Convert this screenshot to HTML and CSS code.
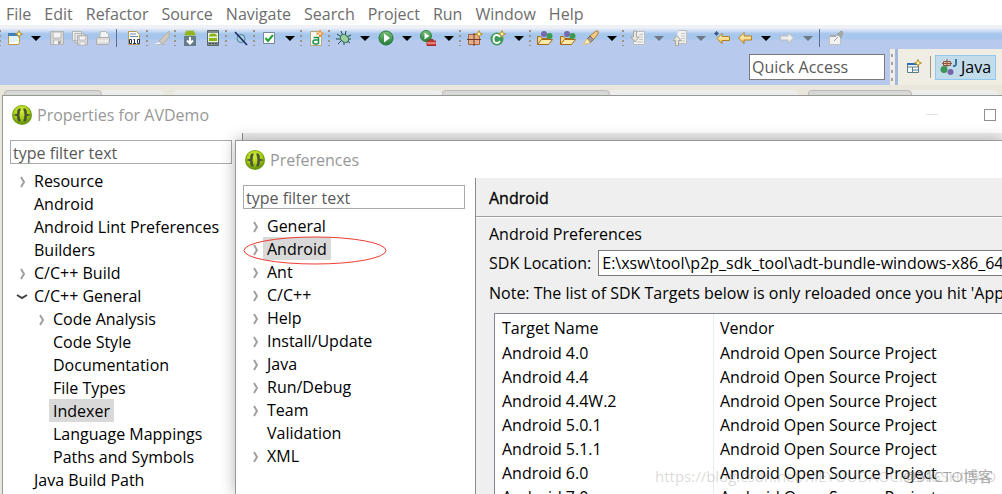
FILE: index.html
```html
<!DOCTYPE html>
<html lang="en">
<head>
<meta charset="utf-8">
<title>Preferences</title>
<link rel="stylesheet" href="styles.css">
</head>
<body>
<svg class="defs" aria-hidden="true">
  <defs>
    <linearGradient id="gold" x1="0" y1="0" x2="0" y2="1"><stop offset="0" stop-color="#fffbe0"/><stop offset="1" stop-color="#f3c24c"/></linearGradient>
    <radialGradient id="lime" cx=".45" cy=".3" r=".75"><stop offset="0" stop-color="#d4ee3a"/><stop offset=".6" stop-color="#a3cc12"/><stop offset="1" stop-color="#5f8a08"/></radialGradient>
    <linearGradient id="green" x1="0" y1="0" x2="0" y2="1"><stop offset="0" stop-color="#7fbf7a"/><stop offset="1" stop-color="#1f7d35"/></linearGradient>
    <symbol id="brand" viewBox="0 0 20 20">
      <circle cx="10" cy="10" r="10" fill="#6d960c"/><circle cx="10" cy="9.600" r="9" fill="url(#lime)"/>
      <path d="M8.500 4.500q-2 0-2 2.500v1.500q0 1.200-1 1.500q1 .3 1 1.500v1.500q0 2.500 2 2.500M11.500 4.500q2 0 2 2.500v1.500q0 1.200 1 1.500q-1 .3-1 1.500v1.500q0 2.500-2 2.500" fill="none" stroke="#4a5238" stroke-width="2.600"/>
    </symbol>
    <symbol id="star" viewBox="0 0 8 8"><path d="M4 .5l1 2.500l2.500 1l-2.500 1l-1 2.500l-1-2.500l-2.500-1l2.500-1z" fill="#fff6b0" stroke="#b98a20" stroke-width=".9"/></symbol>
    <symbol id="folder" viewBox="0 0 16 16">
      <path d="M.5 14.500v-8h3l1.500 2h6v2" fill="#f7d78a" stroke="#a56a16"/>
      <circle cx="7" cy="4" r="3" fill="#7468b0"/><circle cx="12.500" cy="6" r="3" fill="#3c9b4f"/>
      <path d="M.5 14.500l4-5h11l-4 5z" fill="#fde9ac" stroke="#a56a16"/>
    </symbol>
    <symbol id="page" viewBox="0 0 16 16"><path d="M6.500 1.500h8v13h-11v-5" fill="#f1f1f1" stroke="#bdbdbd"/><path d="M9 4.500h4M9 7h4M9 9.500h4M7 12h6" stroke="#c4c4c4"/></symbol>
  </defs>
</svg>

<div class="workbench">
  <nav class="menubar">
    <button>File</button><button>Edit</button><button>Refactor</button><button>Source</button><button>Navigate</button><button>Search</button><button>Project</button><button>Run</button><button>Window</button><button>Help</button>
  </nav>

  <header class="coolbar">
    <div class="toolbar">
      <i class="grip first"></i>
      <button class="tool" aria-label="New"><svg viewBox="0 0 16 16"><path d="M1.500 3.500h11v9q0 2-2 2h-9z" fill="#fff" stroke="#c39a3a"/><path d="M1 3h10v3h-10z" fill="#3f7fb5"/><path d="M2 6h9v5l-9 2z" fill="#e3f1fb"/><use href="#star" x="8" y="0" width="8" height="8"/></svg></button>
      <button class="drop" aria-label="New menu"></button>
      <button class="tool" aria-label="Save"><svg viewBox="0 0 16 16"><path d="M1.500 1.500h13v13h-13z" fill="#d8d8d8" stroke="#b0b0b0"/><path d="M4 2h8v6h-8zM4.500 10h7v4.500h-7z" fill="#f3f3f3" stroke="#b8b8b8"/><path d="M9 11h2v3h-2z" fill="#a5a5a5"/></svg></button>
      <button class="tool" aria-label="Save all"><svg viewBox="0 0 16 16"><path d="M.5 1.500h9v9h-9zM3 3.500h9v9h-9z" fill="#eee" stroke="#b5b5b5"/><path d="M5.500 5.500h10v9.500h-10z" fill="#d8d8d8" stroke="#adadad"/><path d="M7.500 6h6v4h-6zM8 12h5v3h-5z" fill="#f4f4f4" stroke="#b8b8b8" stroke-width=".7"/></svg></button>
      <button class="tool" aria-label="Print"><svg viewBox="0 0 16 16"><path d="M4.500 8l1-6.500h5l3 3v4" fill="#f2f2f2" stroke="#b8b8b8"/><path d="M1.500 8.500l2-1h11v5l-2 2h-11z" fill="#dcdcdc" stroke="#adadad"/><path d="M3 11h10" stroke="#fff"/></svg></button>
      <i class="bar"></i>
      <button class="tool" aria-label="Binary parser"><svg viewBox="0 0 16 16"><path d="M2.500 1.500h8l3 3v10h-11z" fill="#fffdf0" stroke="#b59b55"/><path d="M4 4h6M4 6.500h8" stroke="#6a8cc0"/><path d="M3.500 9.500h2v4h-2zM8.500 9v5M7 13.500h3M8.500 9.500h-1M11.500 9.500h2v4h-2z" fill="none" stroke="#1c2c5e"/></svg></button>
      <i class="grip"></i>
      <button class="tool" aria-label="Mark occurrences"><svg viewBox="0 0 16 16"><path d="M0 14l5-2l2 2z" fill="#eee"/><path d="M5 11l8-8l2-2v6l-6 7z" fill="#cdc9c2" stroke="#b5b0a8"/><path d="M3 14.500h9" stroke="#bbb"/></svg></button>
      <i class="grip"></i>
      <button class="tool" aria-label="SDK manager"><svg viewBox="0 0 16 16"><path d="M3 5q0-4 5-4t5 4zM4 0l1.500 2M12 0l-1.500 2" fill="#93b51b" stroke="#93b51b"/><path d="M2 6h12v10h-12z" fill="#657d8b"/><path d="M8 7v6M5 10.500l3 3l3-3" fill="none" stroke="#fff" stroke-width="2"/></svg></button>
      <button class="tool" aria-label="Virtual device manager"><svg viewBox="0 0 16 16"><path d="M2.500 .5h11v15h-11z" fill="#7f8d8d" stroke="#596669"/><path d="M3 3h10v9h-10z" fill="#edf3d5"/><path d="M4 6.500q0-3 4-3t4 3zM4 8h8v3h-8z" fill="#89b51a"/><path d="M4 13.500h8" stroke="#424d50" stroke-dasharray="2 1"/></svg></button>
      <i class="grip"></i>
      <button class="tool" aria-label="Skip breakpoints"><svg viewBox="0 0 16 16"><circle cx="8" cy="8.500" r="4" fill="#a9d1e0" stroke="#4c7d9c"/><path d="M2 2l12 13" stroke="#17255d" stroke-width="1.500"/></svg></button>
      <i class="grip"></i>
      <button class="tool" aria-label="Run lint"><svg viewBox="0 0 16 16"><path d="M2.500 2.500h11v11h-11z" fill="#fff" stroke="#77889c"/><path d="M4.500 8l2.500 3l5-6" fill="none" stroke="#21a12b" stroke-width="2"/></svg></button>
      <button class="drop" aria-label="Lint menu"></button>
      <i class="grip"></i>
      <button class="tool" aria-label="New Android file"><svg viewBox="0 0 16 16"><path d="M2.500 1.500h8l3 3v11h-11z" fill="#fbfbf2" stroke="#b7a57c"/><path d="M5.500 7.500h5v6.500M10 10h-3q-2 0-2 2t2 2h3" fill="none" stroke="#199253" stroke-width="1.500"/><path d="M12 0v7M8.500 3.500h7" stroke="#f59331" stroke-width="2"/><circle cx="12" cy="3.500" r="1" fill="#fff"/></svg></button>
      <i class="grip"></i>
      <button class="tool" aria-label="Debug"><svg viewBox="0 0 16 16"><path d="M5 1l2 5M10 1l-1 5M1 4l6 4M15 5l-6 3M0 9h15M2 14l5-5M8 15v-6M14 13l-5-4" stroke="#1f4a45"/><ellipse cx="8.500" cy="8.500" rx="4.500" ry="3.500" transform="rotate(40 8.500 8.500)" fill="#9ccf9b" stroke="#2d6e5b"/></svg></button>
      <button class="drop" aria-label="Debug menu"></button>
      <button class="tool" aria-label="Run"><svg viewBox="0 0 16 16"><circle cx="8" cy="8" r="7" fill="url(#green)" stroke="#26773a"/><path d="M6 3.500l6 4.500l-6 4.500z" fill="#fff"/></svg></button>
      <button class="drop" aria-label="Run menu"></button>
      <button class="tool" aria-label="External tools"><svg viewBox="0 0 16 16"><circle cx="6" cy="6" r="5.500" fill="url(#green)" stroke="#2f8741"/><path d="M4.500 2.500l5 3.500l-5 3.500z" fill="#fff"/><path d="M7 11h9v4.500h-9zM10 11v-1.500h3v1.500" fill="#d5473d" stroke="#9b2d28"/><path d="M7 13h9" stroke="#f0b0a8"/></svg></button>
      <button class="drop" aria-label="External tools menu"></button>
      <i class="grip"></i>
      <button class="tool" aria-label="New package"><svg viewBox="0 0 16 16"><path d="M1.500 4.500h11v10h-11z" fill="#e5ad88" stroke="#a0603d"/><path d="M7 3v13M0 9.500h14" stroke="#71382a"/><use href="#star" x="8" y="0" width="8" height="8"/></svg></button>
      <button class="tool" aria-label="New class"><svg viewBox="0 0 16 16"><circle cx="7" cy="9" r="6.500" fill="#3d9b57"/><path d="M10 7q-1-2-3-2q-3.500 0-3.500 4t3.500 4q2 0 3-2" fill="none" stroke="#fff" stroke-width="1.800"/><use href="#star" x="8" y="0" width="8" height="8"/></svg></button>
      <button class="drop" aria-label="New class menu"></button>
      <i class="grip"></i>
      <button class="tool" aria-label="Open type"><svg><use href="#folder"/></svg></button>
      <button class="tool" aria-label="Open task"><svg><use href="#folder"/></svg></button>
      <button class="tool" aria-label="Search"><svg viewBox="0 0 16 16"><path d="M7 6l6-5h2v3l-5 6z" fill="#f8c984" stroke="#b07b35"/><path d="M4 9l3-3l3.500 3.500l-3 3z" fill="#a59a95" stroke="#756863"/><path d="M4 9l-3.500 5.500l6.500-2z" fill="#fffbd0" stroke="#e0c060"/></svg></button>
      <button class="drop" aria-label="Search menu"></button>
      <i class="grip"></i>
      <button class="tool" aria-label="Next annotation"><svg viewBox="0 0 16 16"><use href="#page"/><path d="M3.500 1h3v6h2.500l-4 5l-4-5h2.500z" fill="#e9e6df" stroke="#aaa69c"/></svg></button>
      <button class="drop dim" aria-label="Next annotation menu"></button>
      <button class="tool" aria-label="Previous annotation"><svg viewBox="0 0 16 16"><use href="#page" y="-1"/><path d="M3.500 15.500h3v-5h2.500l-4-5l-4 5h2.500z" fill="#e9e6df" stroke="#aaa69c"/></svg></button>
      <button class="drop dim" aria-label="Previous annotation menu"></button>
      <button class="tool" aria-label="Last edit location"><svg viewBox="0 0 16 16"><path d="M3 8.500l5-5v3h7.500v4h-7.500v3z" fill="url(#gold)" stroke="#b2801e"/><path d="M2.500 1v5M0 3.500h5M1 2l3 3M4 2l-3 3" stroke="#27517c" stroke-width=".8"/></svg></button>
      <button class="tool" aria-label="Back"><svg viewBox="0 0 16 16"><path d="M1.500 8l5.500-5.500v3.500h7.500v4h-7.500v3.500z" fill="url(#gold)" stroke="#b2801e"/></svg></button>
      <button class="drop" aria-label="Back menu"></button>
      <button class="tool" aria-label="Forward"><svg viewBox="0 0 16 16"><path d="M14.500 8l-5.500-5.500v3.500h-7.500v4h7.500v3.500z" fill="#eee" stroke="#bcbcbc"/></svg></button>
      <button class="drop dim" aria-label="Forward menu"></button>
      <i class="bar"></i>
      <button class="tool" aria-label="Pin editor"><svg viewBox="0 0 16 16"><path d="M.5 5.500h11v9h-11z" fill="#f2f2f2" stroke="#c0c0c0"/><path d="M1 5h6v2h-6z" fill="#aaa"/><path d="M5 11l4-4" stroke="#9b9b9b"/><path d="M8 4l4 4l1-3l1-3l-2-1l-2 2z" fill="#a6aaa2" stroke="#8e938c" stroke-width=".6"/></svg></button>
    </div>
    <div class="accessrow">
      <input class="quick" type="text" aria-label="Quick Access" placeholder="Quick Access">
      <div class="perspectives">
        <i class="grip"></i><i class="edge"></i>
        <button class="tool open" aria-label="Open perspective"><svg viewBox="0 0 16 16"><path d="M1.500 4.500h11v9h-11zM1.500 8h11M6.500 8v6M6.500 11h6" fill="#f6fbfd" stroke="#5b7d84"/><path d="M1 4h10v2h-10z" fill="#2c6cb5"/><use href="#star" x="8" y="0" width="8" height="8"/></svg></button>
        <i class="rule"></i>
        <button class="java"><svg viewBox="0 0 18 18"><path d="M3.500 3.500h7v4h-7zM7 1v8M2 5.500h10" fill="#ecc5a5" stroke="#8c5542"/><circle cx="4" cy="11.500" r="3.500" fill="#3e9655"/><circle cx="10.500" cy="14" r="3" fill="#7565ae"/><path d="M16 1v5q0 2.500-3 2" fill="none" stroke="#3774a8" stroke-width="2"/></svg>Java</button>
      </div>
    </div>
  </header>

  <div class="tabstrip"><i class="tab on wide"></i><i class="tab"></i><i class="tab spaced"></i><i class="tab on middle"></i><i class="tab grow"></i><i class="tab on spaced"></i><i class="tab end"></i></div>

  <section class="window properties">
    <div class="titlebar"><svg><use href="#brand"/></svg><h1>Properties for AVDemo</h1><div class="controls"><button class="minimize" aria-label="Minimize"></button><button class="maximize" aria-label="Maximize"></button></div></div>
    <div class="split">
      <div class="side">
        <input class="filter" type="text" aria-label="Filter properties" placeholder="type filter text">
        <ul class="tree">
          <li><div class="node"><button class="twisty" aria-label="Expand"><svg viewBox="0 0 8 12"><path d="M2 1l3 5l-3 5"/></svg></button><span>Resource</span></div></li>
          <li><div class="node leaf"><span>Android</span></div></li>
          <li><div class="node leaf"><span>Android Lint Preferences</span></div></li>
          <li><div class="node leaf"><span>Builders</span></div></li>
          <li><div class="node"><button class="twisty" aria-label="Expand"><svg viewBox="0 0 8 12"><path d="M2 1l3 5l-3 5"/></svg></button><span>C/C++ Build</span></div></li>
          <li><div class="node"><button class="twisty opened" aria-label="Collapse"><svg viewBox="0 0 12 8"><path d="M1 2l5 3l5-3"/></svg></button><span>C/C++ General</span></div>
            <ul>
              <li><div class="node"><button class="twisty" aria-label="Expand"><svg viewBox="0 0 8 12"><path d="M2 1l3 5l-3 5"/></svg></button><span>Code Analysis</span></div></li>
              <li><div class="node leaf"><span>Code Style</span></div></li>
              <li><div class="node leaf"><span>Documentation</span></div></li>
              <li><div class="node leaf"><span>File Types</span></div></li>
              <li><div class="node leaf"><span class="selected">Indexer</span></div></li>
              <li><div class="node leaf"><span>Language Mappings</span></div></li>
              <li><div class="node leaf"><span>Paths and Symbols</span></div></li>
            </ul>
          </li>
          <li><div class="node leaf"><span>Java Build Path</span></div></li>
        </ul>
      </div>
      <div class="pane"></div>
    </div>
  </section>

  <section class="window preferences">
    <div class="titlebar"><svg><use href="#brand"/></svg><h1>Preferences</h1></div>
    <div class="split">
      <div class="side">
        <input class="filter" type="text" aria-label="Filter preferences" placeholder="type filter text">
        <ul class="tree">
          <li><div class="node"><button class="twisty" aria-label="Expand"><svg viewBox="0 0 8 12"><path d="M2 1l3 5l-3 5"/></svg></button><span>General</span></div></li>
          <li><div class="node"><button class="twisty" aria-label="Expand"><svg viewBox="0 0 8 12"><path d="M2 1l3 5l-3 5"/></svg></button><span class="selected">Android</span><svg class="marker" viewBox="0 0 144 29"><ellipse cx="72" cy="14.500" rx="71" ry="13.500"/></svg></div></li>
          <li><div class="node"><button class="twisty" aria-label="Expand"><svg viewBox="0 0 8 12"><path d="M2 1l3 5l-3 5"/></svg></button><span>Ant</span></div></li>
          <li><div class="node"><button class="twisty" aria-label="Expand"><svg viewBox="0 0 8 12"><path d="M2 1l3 5l-3 5"/></svg></button><span>C/C++</span></div></li>
          <li><div class="node"><button class="twisty" aria-label="Expand"><svg viewBox="0 0 8 12"><path d="M2 1l3 5l-3 5"/></svg></button><span>Help</span></div></li>
          <li><div class="node"><button class="twisty" aria-label="Expand"><svg viewBox="0 0 8 12"><path d="M2 1l3 5l-3 5"/></svg></button><span>Install/Update</span></div></li>
          <li><div class="node"><button class="twisty" aria-label="Expand"><svg viewBox="0 0 8 12"><path d="M2 1l3 5l-3 5"/></svg></button><span>Java</span></div></li>
          <li><div class="node"><button class="twisty" aria-label="Expand"><svg viewBox="0 0 8 12"><path d="M2 1l3 5l-3 5"/></svg></button><span>Run/Debug</span></div></li>
          <li><div class="node"><button class="twisty" aria-label="Expand"><svg viewBox="0 0 8 12"><path d="M2 1l3 5l-3 5"/></svg></button><span>Team</span></div></li>
          <li><div class="node leaf"><span>Validation</span></div></li>
          <li><div class="node"><button class="twisty" aria-label="Expand"><svg viewBox="0 0 8 12"><path d="M2 1l3 5l-3 5"/></svg></button><span>XML</span></div></li>
        </ul>
      </div>
      <div class="pane">
        <h2>Android</h2>
        <div class="form">
          <p>Android Preferences</p>
          <div class="field"><label for="sdk">SDK Location:</label><input id="sdk" type="text" value="E:\xsw\tool\p2p_sdk_tool\adt-bundle-windows-x86_64"></div>
          <p class="note">Note: The list of SDK Targets below is only reloaded once you hit 'Apply'</p>
          <table>
            <thead><tr><th>Target Name</th><th>Vendor</th></tr></thead>
            <tbody>
              <tr><td>Android 4.0</td><td>Android Open Source Project</td></tr>
              <tr><td>Android 4.4</td><td>Android Open Source Project</td></tr>
              <tr><td>Android 4.4W.2</td><td>Android Open Source Project</td></tr>
              <tr><td>Android 5.0.1</td><td>Android Open Source Project</td></tr>
              <tr><td>Android 5.1.1</td><td>Android Open Source Project</td></tr>
              <tr><td>Android 6.0</td><td>Android Open Source Project</td></tr>
              <tr><td>Android 7.0</td><td>Android Open Source Project</td></tr>
            </tbody>
          </table>
        </div>
      </div>
    </div>
  </section>
  <div class="watermark source">https://blog.csdn.net/XIEYOUDAOCHENGSHIDAO</div>
  <div class="watermark host">@51CTO博客</div>
</div>
</body>
</html>
```
FILE: styles.css
```css
* { box-sizing: border-box; }
body, h1, h2, p, ul { margin: 0; padding: 0; }
body, button, input, table { font: 16px/20px "Open Sans", "Noto Sans CJK SC", sans-serif; }
body { color: #000; background: #e9e6dc; }
button { padding: 0; border: 0; background: none; color: inherit; }
input { min-width: 0; border: 1px solid #7a7a7a; background: #fff; }
input::placeholder { color: #595959; opacity: 1; }
ul { list-style: none; }
svg { display: block; flex: none; }
.defs { position: absolute; width: 0; height: 0; }

.workbench { position: relative; display: flex; flex-direction: column; height: 100vh; overflow: hidden; }
.menubar { display: flex; gap: 13px; height: 25px; padding: 4px 6px 1px; background: #fff; color: #6d6d6d; }

.coolbar { display: flex; flex-direction: column; height: 60px; background: linear-gradient(#f1f1f3 0, #eef1f9 3px, #a6c6ec 9px, #a6c6ec 14px, #b7c9ed 15px); }
.toolbar { display: flex; align-items: center; height: 24px; padding-top: 2px; }
.tool { display: flex; align-items: center; justify-content: center; flex: none; width: 23px; height: 22px; }
.tool svg { width: 16px; height: 16px; }
.drop { display: flex; justify-content: center; flex: none; width: 19px; }
.drop::before { content: ""; border: 5px solid transparent; border-top-color: #000; border-bottom: 0; }
.drop.dim::before { border-top-color: #717784; }
.grip { flex: none; width: 5px; height: 16px; background: repeating-linear-gradient(#9b927f 0 2px, transparent 2px 5px) 1px 0 / 2px 100% no-repeat; }
.grip.first { width: 3px; background-position: -1px 0; }
.bar { flex: none; width: 8px; height: 18px; background: linear-gradient(#5e6f95, #5e6f95) 2px 0 / 1px 100% no-repeat; }
.accessrow { display: flex; justify-content: flex-end; height: 36px; }
.quick { width: 136px; height: 26px; margin: 5px 5px 0 0; padding: 0 2px; }
.perspectives { display: flex; align-items: center; width: 112px; background: #f0ede4; padding-right: 6px; }
.perspectives .grip { height: 27px; background: repeating-linear-gradient(#a5a29a 0 3px, transparent 3px 8px) 1px 0 / 2px 100% no-repeat; }
.edge { width: 3px; height: 36px; background: #9fb8e2; }
.tool.open { width: 32px; }
.rule { width: 1px; height: 22px; margin-right: 4px; background: #9a968a; }
.java { display: flex; align-items: center; justify-content: center; gap: 3px; flex: 1; height: 25px; border: 1px solid #91c8f2; background: #c3dcea; }
.java svg { width: 18px; height: 18px; }

.tabstrip { display: flex; height: 10px; padding: 5px 0 0 4px; }
.tab { height: 5px; width: 62px; border-radius: 0 6px 0 0; background: #ededec; }
.tab.on { width: 104px; border: 1px solid #b9b9bd; border-bottom: 0; border-radius: 5px 6px 0 0; background: #d8d8d5; }
.tab.wide { width: 98px; }
.tab.spaced { margin-left: 10px; border-radius: 5px 6px 0 0; }
.tab:nth-child(3) { width: 268px; }
.tab.middle { width: 168px; }
.tab.grow { flex: 1; }
.tab.end { width: 86px; margin-right: 4px; }

.window { position: absolute; right: 0; bottom: 0; display: flex; flex-direction: column; border: 1px solid #989898; border-width: 1px 0 0 1px; background: #fff; }
.properties { left: 2px; top: 95px; }
.preferences { left: 235px; top: 140px; box-shadow: 0 0 14px rgba(0, 0, 0, .3); }
.titlebar { display: flex; align-items: center; gap: 5px; height: 37px; padding: 0 6px 0 9px; color: #989898; }
.titlebar svg { width: 20px; height: 20px; }
.titlebar h1 { font-size: 16px; font-weight: 400; }
.controls { display: flex; align-items: center; gap: 46px; margin-left: auto; }
.minimize { width: 12px; height: 1px; background: #e2e2e2; }
.maximize { width: 12px; height: 12px; border: 1px solid #8f8f8f; }
.split { display: flex; flex: 1; min-height: 0; }
.side { display: flex; flex-direction: column; flex: none; width: 239px; padding: 7px 10px 0 7px; }
.filter { flex: none; height: 24px; padding: 1px 2px 0; border-color: #a9a9b0; }
.tree { padding: 5px 0 0 4px; }
.tree ul { padding-left: 19px; }
.node { position: relative; display: flex; align-items: center; height: 23px; }
.node span { height: 23px; padding: 2px 4px 1px; white-space: nowrap; }
.leaf { padding-left: 16px; }
.selected { background: #d9d9d9; }
.twisty { display: flex; justify-content: center; width: 16px; padding: 3px 0 0 2px; }
.twisty svg { width: 8px; height: 12px; fill: none; stroke: #a0a0a0; stroke-width: 2; }
.twisty.opened { padding-left: 0; }
.twisty.opened svg { width: 12px; height: 8px; stroke: #404040; }
.marker { position: absolute; left: -4px; top: -1px; width: 144px; height: 29px; fill: none; stroke: #ee3c31; }

.pane { flex: 1; min-width: 0; overflow: hidden; border-left: 1px solid #8c8c8c; background: #efefef; }
.pane h2 { height: 39px; padding: 10px 13px 0; border-bottom: 1px solid #a0a0a0; font-size: 16px; font-weight: 400; line-height: 20px; -webkit-text-stroke: .3px #000; }
.form { padding: 6px 0 0 13px; border-top: 1px solid #fff; white-space: nowrap; }
.field { display: flex; align-items: center; gap: 7px; height: 26px; margin: 6px 0 7px; }
.field input { flex: 1; height: 26px; margin-right: -12px; padding: 0 3px; }
.form table { width: 100%; margin: 10px 0 0 5px; table-layout: fixed; border-collapse: separate; border-spacing: 0; border: 1px solid #828790; background: #fff; }
.form th, .form td { height: 24px; padding: 0 6px 0 7px; font-weight: 400; text-align: left; }
.form th { height: 27px; padding-top: 1px; }
.form th:first-child { width: 219px; }
.form th:last-child, .form td:last-child { padding-left: 6px; }
.form th:first-child, .form td:first-child { border-right: 1px solid #e6edf4; }

.watermark { position: absolute; bottom: 8px; white-space: nowrap; font-size: 15px; }
.source { left: 655px; color: rgba(120, 120, 120, .28); }
.host { right: 9px; color: rgba(120, 120, 120, .6); }
```
